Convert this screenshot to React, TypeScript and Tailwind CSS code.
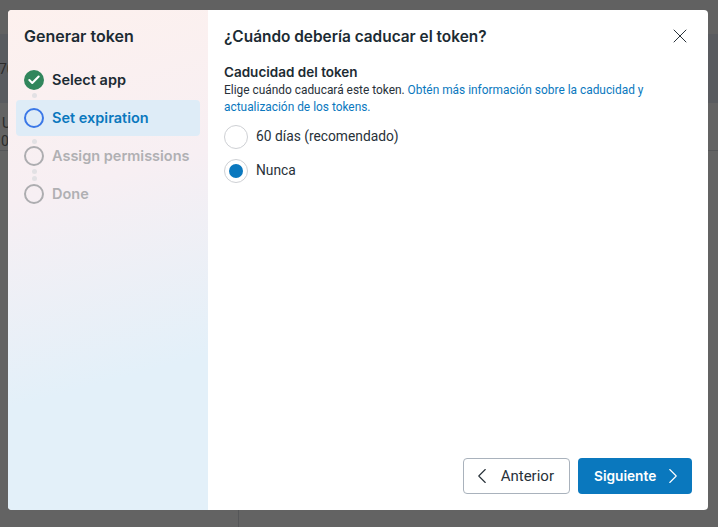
import React from 'react';
import { Check, ChevronLeft, ChevronRight, X } from 'lucide-react';

const Dot = ({ className }: { className: string }) => (
  <span className={`absolute left-[15.5px] h-[5px] w-[5px] rounded-full bg-[#e2e1e4] ${className}`} />
);

const Radio = ({ checked, label }: { checked?: boolean; label: string }) => (
  <label className="flex items-center gap-2">
    <span className="flex h-6 w-6 items-center justify-center rounded-full border border-[#ced0d4] bg-white">
      {checked && <span className="h-[14px] w-[14px] rounded-full bg-[#0a78be]" />}
    </span>
    <span className="-mt-[1px] font-['Roboto',sans-serif] text-[13.8px] text-[#283139]">{label}</span>
  </label>
);

const Step = ({ label, children, className, labelClass }: { label: string; children: React.ReactNode; className?: string; labelClass: string }) => (
  <div className={`relative flex h-9 items-center gap-2 rounded-[4px] px-2 ${className ?? ''}`}>
    {children}
    <span className={`text-[14.5px] font-semibold ${labelClass}`}>{label}</span>
  </div>
);

export default function App() {
  return (
    <div className="relative h-[527px] w-[718px] overflow-hidden bg-[#636363] font-['Inter',sans-serif]">
      {/* page behind the overlay */}
      <div className="h-[34px] bg-[#616161]" />
      <div className="flex h-[69px] items-center bg-[#595b5f] font-['Roboto',sans-serif] text-sm text-[#2c2c2c]">
        <span className="-ml-[1px]">70</span>
      </div>
      <div className="flex h-[48px] flex-col justify-center border-b border-[#555658] font-['Roboto',sans-serif] text-sm leading-[18px] text-[#2c2c2c]">
        <span className="ml-[2px] mt-[10px]">U</span>
        <span className="ml-[1px]">07</span>
      </div>
      <div className="ml-[238px] h-full border-l border-[#555658]" />

      <div className="absolute left-2 top-[10px] flex h-[500px] w-[700px] overflow-hidden rounded-[4px] bg-white">
        <aside className="w-[200px] shrink-0 bg-[linear-gradient(165deg,#fdf1ee_0%,#f7eff3_35%,#e3f0f9_72%,#e3f0f9_100%)] px-2 pt-[16px]">
          <h2 className="pl-2 text-base font-semibold leading-5 text-[#1c2b33]">Generar token</h2>
          <div className="mt-4 flex flex-col gap-[2px]">
            <Step label="Select app" labelClass="text-[#1c2b33]">
              <span className="flex h-5 w-5 items-center justify-center rounded-full bg-[#31865c]">
                <Check size={14} strokeWidth={3.5} className="text-white" />
              </span>
              <Dot className="top-[30.5px]" />
            </Step>
            <Step label="Set expiration" className="bg-[#deecf7]" labelClass="text-[#0a78be]">
              <span className="h-5 w-5 rounded-full border-2 border-[#3b78e7]" />
            </Step>
            <Step label="Assign permissions" labelClass="text-[#b0b0b3]">
              <span className="h-5 w-5 rounded-full border-2 border-[#adadb0]" />
              <Dot className="top-[0.5px]" />
              <Dot className="top-[30.5px]" />
            </Step>
            <Step label="Done" labelClass="text-[#b0b0b3]">
              <span className="h-5 w-5 rounded-full border-2 border-[#adadb0]" />
              <Dot className="top-0" />
            </Step>
          </div>
        </aside>
        <main className="flex flex-1 flex-col px-4 pb-4 pt-[14px]">
          <div className="flex items-center justify-between">
            <h1 className="mt-[1px] text-[15.4px] font-semibold leading-5 text-[#1c2b33]">¿Cuándo debería caducar el token?</h1>
            <button className="text-[#283139]">
              <X size={24} strokeWidth={1} />
            </button>
          </div>
          <h3 className="mt-[15px] text-[13.5px] font-semibold leading-[18px] text-[#1c2b33]">Caducidad del token</h3>
          <p className="mt-[1px] font-['Roboto',sans-serif] text-[11.9px] leading-[17px] text-[#283139]">
            Elige cuándo caducará este token.{' '}
            <a className="text-[#0a78be]">Obtén más información sobre la caducidad y actualización de los tokens.</a>
          </p>
          <div className="mt-[9px] flex flex-col gap-[10px]">
            <Radio label="60 días (recomendado)" />
            <Radio checked label="Nunca" />
          </div>
          <div className="mt-auto flex justify-end gap-2">
            <button className="flex h-9 w-[107px] items-center justify-between rounded-[4px] border border-[#a9b2bc] bg-white pl-[5px] pr-[15px] font-['Roboto',sans-serif] text-[15px] text-[#283139]">
              <ChevronLeft size={26} strokeWidth={1} />
              Anterior
            </button>
            <button className="flex h-9 w-[114px] items-center justify-between rounded-[4px] bg-[#0a78be] pl-4 pr-[6px] text-[13.7px] font-semibold text-white">
              Siguiente
              <ChevronRight size={26} strokeWidth={1} />
            </button>
          </div>
        </main>
      </div>
    </div>
  );
}
